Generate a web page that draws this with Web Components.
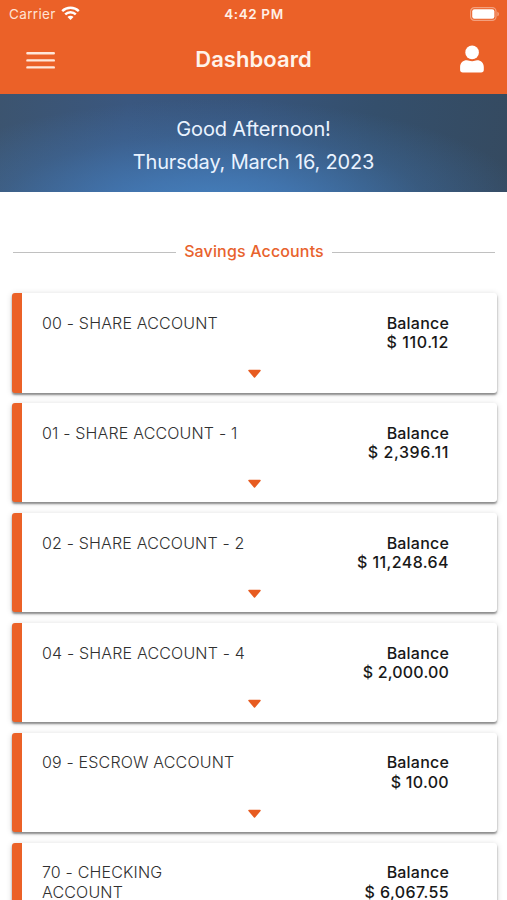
<!DOCTYPE html>
<html lang="en">
<head>
<meta charset="utf-8">
<title>Dashboard</title>
<style>
html,body{margin:0;background:#fff}
body{height:900px;overflow:hidden;font-family:Inter,"Liberation Sans",sans-serif;color:#222}
</style>
</head>
<body>
<bank-app></bank-app>
<script>
const define=(name,html)=>customElements.define(name,class extends HTMLElement{
  constructor(){super();this.attachShadow({mode:'open'}).innerHTML=html}
});
define('status-bar',`<style>
:host{display:grid;grid-template-columns:1fr auto 1fr;align-items:center;height:26px;padding:0 7px 0 9px;color:#fff;font-size:13.5px;line-height:26px}
.l{display:flex;align-items:center;gap:5px;color:#ffe3d4}
.t{font-weight:600;font-size:13.5px;color:#fff0e6;letter-spacing:.6px;padding:1px 1px 0 0}
.r{justify-self:end;display:flex}
svg{display:block}
.c{letter-spacing:.35px;padding-top:1px}
</style>
<div class="l"><span class="c">Carrier</span><svg width="19" height="15" viewBox="0 0 19 15" fill="none" stroke="#fff" stroke-width="2.4"><path d="M1.2 5.2a11.8 11.8 0 0 1 16.6 0M4.2 8.4a7.5 7.5 0 0 1 10.6 0"/><path d="M9.5 14 6.5 11a4.25 4.25 0 0 1 6 0z" fill="#fff" stroke="none"/></svg></div>
<div class="t">4:42 PM</div>
<div class="r"><svg width="30" height="14" viewBox="0 0 30 14"><rect x=".6" y=".6" width="25.4" height="12.8" rx="3.8" fill="none" stroke="#fff" stroke-opacity=".4" stroke-width="1.2"/><rect x="2.2" y="2.2" width="22.2" height="9.6" rx="2.2" fill="#fff"/><path d="M27.3 4.7c2.2.7 2.2 3.9 0 4.6z" fill="#fff" opacity=".4"/></svg></div>`);
define('app-header',`<style>
:host{display:grid;grid-template-columns:1fr auto 1fr;align-items:center;height:66px;padding:0 22px 0 26px;box-sizing:border-box}
h1{margin:0;font-size:22px;line-height:66px;font-weight:600;color:#fff3ea;letter-spacing:.05px;padding-right:4px}
svg{display:block}
.u{justify-self:end}
</style>
<svg width="30" height="20" viewBox="0 0 30 20" stroke="#ffe7da" stroke-width="2.4" stroke-linecap="round"><path d="M1.4 4.2h26.4M1.4 11.4h26.4M1.4 18.400h26.400"/></svg>
<h1><slot></slot></h1>
<svg class="u" width="26" height="28" viewBox="0 0 26 28" fill="#fff"><circle cx="13.1" cy="7.4" r="6.8"/><path d="M3.8 27.4Q1.1 27.4 1.1 24.7V22c0-4 3-6.7 6.7-6.7 2 0 2.8.9 5.3.9s3-.9 5-.9c3.7 0 6.7 2.7 6.7 6.7v2.7q0 2.7-2.7 2.7z"/></svg>`);
define('greeting-banner',`<style>
:host{display:flex;flex-direction:column;align-items:center;height:97.5px;box-sizing:border-box;padding-top:19px;color:#eaf3ff;font-size:20px;line-height:33px;
background:radial-gradient(ellipse 320px 110px at 42% 118%,#4682c0 0%,rgba(68,124,186,.8) 30%,rgba(66,120,181,.3) 68%,rgba(66,120,181,0) 100%),linear-gradient(100deg,#3c546f 0%,#3a577f 25%,#37547a 50%,#344f6c 72%,#354a60 100%)}
.a{letter-spacing:-.14px}.b{letter-spacing:-.17px}
</style>
<div class="a"><slot name="greeting"></slot></div><div class="b"><slot name="date"></slot></div>`);
define('section-title',`<style>
:host{display:flex;align-items:center;gap:8px;margin:47.5px 12px 0 13px;height:24px;color:#e8622d;font-size:16px;font-weight:500;line-height:24px;white-space:nowrap}
i{flex:1;height:1px;background:#c0c0c0;margin-top:3px}
span{letter-spacing:.15px}
</style><i></i><span><slot></slot></span><i></i>`);
define('account-card',`<style>
:host{display:flex;position:relative;height:99.5px;box-sizing:border-box;background:#fff;border-left:10.5px solid #eb6127;border-radius:3px;padding:20.8px 48px 0 20.5px;justify-content:space-between;font-size:16px;line-height:19.6px;box-shadow:0 2px 2px rgba(0,0,0,.4),0 1px 6px rgba(0,0,0,.16)}
.n{white-space:nowrap;color:#303030;font-weight:300;letter-spacing:.17px}
.b{text-align:right;font-weight:500;color:#181818;white-space:nowrap}
.k{letter-spacing:.2px}
.v{letter-spacing:var(--track,.3px)}
svg{position:absolute;left:225px;top:76px}
</style><div class="n"><slot></slot></div><div class="b"><div class="k">Balance</div><div class="v"><slot name="amount"></slot></div></div>
<svg width="15" height="10" viewBox="0 0 15 10"><path d="M2 1.5h11L7.5 8z" fill="#e75b20" stroke="#e75b20" stroke-width="1.5" stroke-linejoin="round"/></svg>`);
define('bank-app',`<style>
:host{display:block;height:900px;overflow:hidden}
header{background:#eb6128;height:94px}
main{display:flex;flex-direction:column;gap:10.4px;margin:30.1px 10px 0 11.5px}
account-card{flex:none}
</style>
<header><status-bar></status-bar><app-header>Dashboard</app-header></header>
<greeting-banner><span slot="greeting">Good Afternoon!</span><span slot="date">Thursday, March 16, 2023</span></greeting-banner>
<section-title>Savings Accounts</section-title>
<main>
<account-card style="--track:.6px">00 - SHARE ACCOUNT<span slot="amount">$ 110.12</span></account-card>
<account-card style="--track:.6px">01 - SHARE ACCOUNT - 1<span slot="amount">$ 2,396.11</span></account-card>
<account-card style="--track:.4px">02 - SHARE ACCOUNT - 2<span slot="amount">$ 11,248.64</span></account-card>
<account-card style="--track:.17px">04 - SHARE ACCOUNT - 4<span slot="amount">$ 2,000.00</span></account-card>
<account-card style="--track:.3px">09 - ESCROW ACCOUNT<span slot="amount">$ 10.00</span></account-card>
<account-card style="--track:.38px">70 - CHECKING<br>ACCOUNT<span slot="amount">$ 6,067.55</span></account-card>
</main>`);
</script>
</body>
</html>
